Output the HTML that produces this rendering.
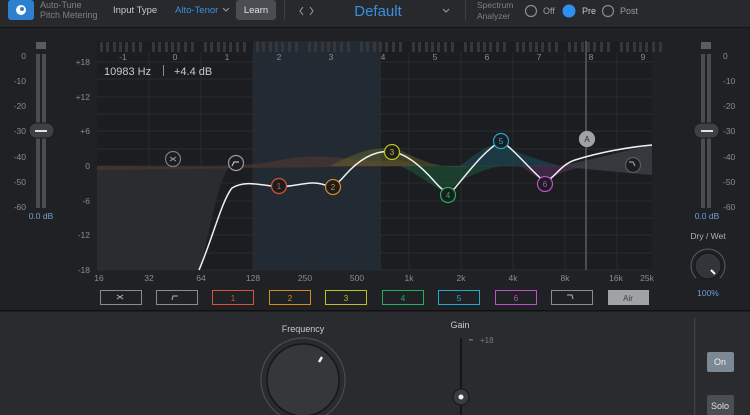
<!DOCTYPE html>
<html><head><meta charset="utf-8"><style>
*{margin:0;padding:0;box-sizing:border-box}
body{width:750px;height:415px;overflow:hidden;background:#202124;font-family:"Liberation Sans",sans-serif}
svg{display:block}
</style></head><body>
<svg width="750" height="415" viewBox="0 0 750 415" xmlns="http://www.w3.org/2000/svg" font-family="Liberation Sans, sans-serif">
<rect x="0" y="0" width="750" height="27" fill="#28292c"/>
<rect x="0" y="27" width="750" height="1" fill="#141517"/>
<rect x="8" y="0" width="26" height="20" rx="3" fill="#2d7fd0"/>
<circle cx="21" cy="10" r="5" fill="#fff"/><circle cx="22" cy="9" r="2" fill="#2d7fd0"/>
<text x="40" y="8" font-size="9" fill="#7d8085">Auto-Tune</text>
<text x="40" y="18" font-size="9" fill="#7d8085">Pitch Metering</text>
<text x="113" y="13" font-size="9.5" fill="#c8c9cc">Input Type</text>
<text x="175" y="13" font-size="9.5" fill="#3a8fe0">Alto-Tenor</text>
<path d="M223 8 l3 3 l3 -3" stroke="#9a9ca0" fill="none"/>
<rect x="236" y="0" width="40" height="20" rx="3" fill="#4a4d52"/>
<text x="256" y="13" font-size="9.5" fill="#e0e1e3" text-anchor="middle">Learn</text>
<rect x="284" y="0" width="1" height="20" fill="#3c3e42"/>
<path d="M303 7 l-3 4 l3 4 M310 7 l3 4 l-3 4" stroke="#9a9ca0" fill="none"/>
<text x="378" y="16" font-size="15" fill="#3a8fe0" text-anchor="middle">Default</text>
<path d="M443 9 l3 3 l3 -3" stroke="#9a9ca0" fill="none"/>
<rect x="465" y="0" width="1" height="20" fill="#3c3e42"/>
<text x="477" y="8" font-size="8.5" fill="#7d8085">Spectrum</text>
<text x="477" y="19" font-size="8.5" fill="#7d8085">Analyzer</text>
<circle cx="531" cy="11" r="5.5" fill="none" stroke="#8a8c90" stroke-width="1.2"/>
<text x="543" y="14" font-size="9" fill="#9a9ca0">Off</text>
<circle cx="569" cy="11" r="6.5" fill="#2e8ff0"/>
<text x="582" y="14" font-size="9" fill="#c8c9cc">Pre</text>
<circle cx="608" cy="11" r="5.5" fill="none" stroke="#8a8c90" stroke-width="1.2"/>
<text x="620" y="14" font-size="9" fill="#9a9ca0">Post</text>

<rect x="36" y="42" width="10" height="7" fill="#5a5c60"/>
<rect x="36" y="54" width="4" height="154" fill="#4a4c50"/>
<rect x="42" y="54" width="4" height="154" fill="#4a4c50"/>
<rect x="29" y="123" width="25" height="15" rx="7" fill="#3e4044" stroke="#1a1b1d"/>
<rect x="35" y="130" width="12" height="2" fill="#e0e0e0"/>
<g font-size="8.5" fill="#8a8c90" text-anchor="end">
<text x="26" y="59">0</text><text x="26" y="84">-10</text><text x="26" y="109">-20</text><text x="26" y="134">-30</text><text x="26" y="160">-40</text><text x="26" y="185">-50</text><text x="26" y="210">-60</text></g>
<text x="41" y="219" font-size="8.5" fill="#6f9fd0" text-anchor="middle">0.0 dB</text>
<rect x="701" y="42" width="10" height="7" fill="#5a5c60"/>
<rect x="701" y="54" width="4" height="154" fill="#4a4c50"/>
<rect x="707" y="54" width="4" height="154" fill="#4a4c50"/>
<rect x="694" y="123" width="25" height="15" rx="7" fill="#3e4044" stroke="#1a1b1d"/>
<rect x="701" y="130" width="12" height="2" fill="#e0e0e0"/>
<g font-size="8.5" fill="#8a8c90">
<text x="723" y="59">0</text><text x="723" y="84">-10</text><text x="723" y="109">-20</text><text x="723" y="134">-30</text><text x="723" y="160">-40</text><text x="723" y="185">-50</text><text x="723" y="210">-60</text></g>
<text x="707" y="219" font-size="8.5" fill="#6f9fd0" text-anchor="middle">0.0 dB</text>
<text x="708" y="239" font-size="8.5" fill="#b0b2b5" text-anchor="middle">Dry / Wet</text>
<path d="M696 278 A17 17 0 1 1 720 278" fill="none" stroke="#5a5c60"/>
<circle cx="708" cy="266" r="13" fill="#33353a" stroke="#141517"/>
<path d="M711 270 l4 4" stroke="#fff" stroke-width="2"/>
<text x="708" y="296" font-size="8.5" fill="#6f9fd0" text-anchor="middle">100%</text>

<rect x="97" y="41" width="555" height="229" fill="#1c1d20"/>
<rect x="253" y="41" width="128" height="229" fill="#222a34"/>
<g stroke="#2a2c30" stroke-width="1">
<path d="M97 62H652M97 79H652M97 97H652M97 114H652M97 131H652M97 149H652M97 166H652M97 183H652M97 201H652M97 218H652M97 235H652M97 253H652M97 270H652"/>
<path d="M149 52V270M201 52V270M253 52V270M305 52V270M357 52V270M409 52V270M461 52V270M513 52V270M565 52V270M617 52V270"/>
</g>
<g fill="#35373b">
<path d="M100 42h3v10h-3zM106 42h3v10h-3zM113 42h3v10h-3zM119 42h3v10h-3zM125 42h3v10h-3zM132 42h3v10h-3zM139 42h3v10h-3z" id="oct"/>
<use href="#oct" x="52"/><use href="#oct" x="104"/><use href="#oct" x="156"/><use href="#oct" x="208"/><use href="#oct" x="260"/><use href="#oct" x="312"/><use href="#oct" x="364"/><use href="#oct" x="416"/><use href="#oct" x="468"/><use href="#oct" x="520"/>
</g>
<g font-size="8.5" fill="#8a8c90" text-anchor="middle">
<text x="123" y="60">-1</text><text x="175" y="60">0</text><text x="227" y="60">1</text><text x="279" y="60">2</text><text x="331" y="60">3</text><text x="383" y="60">4</text><text x="435" y="60">5</text><text x="487" y="60">6</text><text x="539" y="60">7</text><text x="591" y="60">8</text><text x="643" y="60">9</text>
</g>
<g font-size="8.5" fill="#8a8c90" text-anchor="end">
<text x="90" y="65">+18</text><text x="90" y="100">+12</text><text x="90" y="134">+6</text><text x="90" y="169">0</text><text x="90" y="204">-6</text><text x="90" y="238">-12</text><text x="90" y="273">-18</text></g>
<g font-size="8.5" fill="#8a8c90" text-anchor="middle">
<text x="99" y="281">16</text><text x="149" y="281">32</text><text x="201" y="281">64</text><text x="253" y="281">128</text><text x="305" y="281">250</text><text x="357" y="281">500</text><text x="409" y="281">1k</text><text x="461" y="281">2k</text><text x="513" y="281">4k</text><text x="565" y="281">8k</text><text x="616" y="281">16k</text><text x="647" y="281">25k</text></g>
<text x="104" y="75" font-size="11" fill="#c8c9cc">10983 Hz</text>
<rect x="163" y="65" width="1" height="11" fill="#8a8c90"/>
<text x="174" y="75" font-size="11" fill="#c8c9cc">+4.4 dB</text>
<path d="M97 166H230C220 175 212 220 200 270H97Z" fill="#2b2c2f"/>
<path d="M97 166 C180 166 230 170 280 160 C330 150 360 165 400 160 L420 166 L97 170Z" fill="#5a3a30" opacity="0.5"/>
<path d="M330 166 C360 150 380 145 400 150 C420 160 440 170 470 166Z" fill="#6a6a2a" opacity="0.45"/>
<path d="M400 166 C430 180 440 195 450 190 C460 180 480 170 500 166Z" fill="#1d5a3a" opacity="0.55"/>
<path d="M460 166 C480 150 495 140 505 145 C520 155 540 160 560 166Z" fill="#1d5060" opacity="0.55"/>
<path d="M520 166 C535 175 540 182 548 180 C560 172 575 168 590 166Z" fill="#5a3060" opacity="0.55"/>
<path d="M560 166 C590 160 620 152 652 145 V175 C620 172 590 170 560 166Z" fill="#3a3c40" opacity="0.9"/>
<path d="M586 41V270" stroke="#6a6c70" stroke-width="1.2"/>
<path d="M199 270 C212 240 222 200 232 188 C245 180 260 185 279 187 C300 186 310 180 325 185 C335 190 340 180 350 170 C365 155 380 150 392 152 C405 153 420 165 435 182 C442 190 448 196 455 188 C470 170 485 150 501 141 C515 150 530 170 545 182 C555 178 560 165 575 160 C600 152 630 147 652 145" fill="none" stroke="#f0f0f0" stroke-width="1.5"/>
<g fill="#1c1d20" stroke-width="1.2" font-size="8" text-anchor="middle">
<circle cx="173" cy="159" r="7.5" stroke="#7a7c80"/><path d="M170 157l6 4M176 157l-6 4" stroke="#8a8c90"/>
<circle cx="236" cy="163" r="7.5" stroke="#9a9ca0"/><path d="M232 166l2-4h5" stroke="#c0c0c0" fill="none"/>
<circle cx="279" cy="186" r="7.5" stroke="#d8553a"/><text x="279" y="189" fill="#d8553a" stroke="none">1</text>
<circle cx="333" cy="187" r="7.5" stroke="#d88a20"/><text x="333" y="190" fill="#d88a20" stroke="none">2</text>
<circle cx="392" cy="152" r="7.5" stroke="#c0c020"/><text x="392" y="155" fill="#c0c020" stroke="none">3</text>
<circle cx="448" cy="195" r="7.5" stroke="#20b060"/><text x="448" y="198" fill="#20b060" stroke="none">4</text>
<circle cx="501" cy="141" r="7.5" stroke="#20a8d0"/><text x="501" y="144" fill="#20a8d0" stroke="none">5</text>
<circle cx="545" cy="184" r="7.5" stroke="#c050c8"/><text x="545" y="187" fill="#c050c8" stroke="none">6</text>
<circle cx="587" cy="139" r="7.5" fill="#a0a2a5" stroke="#a0a2a5"/><text x="587" y="142" fill="#2a2b2e" stroke="none">A</text>
<circle cx="633" cy="165" r="7.5" stroke="#5a5c60"/><path d="M629 162h4l2 4" stroke="#9a9ca0" fill="none"/>
</g>
<g fill="none" stroke-width="1" font-size="8" text-anchor="middle">
<rect x="100.5" y="290.5" width="41" height="14" stroke="#8a8c90"/><path d="M117 295l6 4M123 295l-6 4" stroke="#b0b2b5"/>
<rect x="156.5" y="290.5" width="41" height="14" stroke="#8a8c90"/><path d="M172 300l1-4h5" stroke="#b0b2b5"/>
<rect x="212.5" y="290.5" width="41" height="14" stroke="#d8553a"/><text x="233" y="301" fill="#d8553a">1</text>
<rect x="269.5" y="290.5" width="41" height="14" stroke="#d88a20"/><text x="290" y="301" fill="#d88a20">2</text>
<rect x="325.5" y="290.5" width="41" height="14" stroke="#c0c020"/><text x="346" y="301" fill="#c0c020">3</text>
<rect x="382.5" y="290.5" width="41" height="14" stroke="#20b060"/><text x="403" y="301" fill="#20b060">4</text>
<rect x="438.5" y="290.5" width="41" height="14" stroke="#20a8d0"/><text x="459" y="301" fill="#20a8d0">5</text>
<rect x="495.5" y="290.5" width="41" height="14" stroke="#c050c8"/><text x="516" y="301" fill="#c050c8">6</text>
<rect x="551.5" y="290.5" width="41" height="14" stroke="#8a8c90"/><path d="M567 295h5l1 4" stroke="#b0b2b5"/>
<rect x="608" y="290" width="41" height="15" fill="#a0a2a5"/><text x="628" y="301" fill="#3a3c40">Air</text>
</g>
<rect x="0" y="311" width="750" height="104" fill="#2a2b2e"/>
<rect x="0" y="310" width="750" height="1.5" fill="#111214"/>
<text x="303" y="332" font-size="9" fill="#c8c9cc" text-anchor="middle">Frequency</text>
<circle cx="303" cy="380" r="42" fill="none" stroke="#4a4c50" stroke-width="1.2"/>
<circle cx="303" cy="380" r="36" fill="#35373b" stroke="#151618" stroke-width="1.5"/>
<path d="M319 362 l3 -5" stroke="#f0f0f0" stroke-width="2.5"/>
<text x="460" y="328" font-size="9" fill="#c8c9cc" text-anchor="middle">Gain</text>
<rect x="460" y="338" width="2" height="80" fill="#151618"/>
<rect x="469" y="339" width="4" height="1.5" fill="#6a6c70"/>
<text x="480" y="343" font-size="8" fill="#7a7c80">+18</text>
<circle cx="461" cy="397" r="8" fill="#3a3c40" stroke="#151618"/>
<circle cx="461" cy="397" r="2.5" fill="#f0f0f0"/>
<rect x="694" y="318" width="1.5" height="97" fill="#3c3e42"/>
<rect x="707" y="352" width="27" height="20" rx="2" fill="#7d8895"/>
<text x="720" y="365" font-size="9" fill="#f0f0f0" text-anchor="middle">On</text>
<rect x="707" y="395" width="27" height="20" rx="2" fill="#4a4d52"/>
<text x="720" y="409" font-size="9" fill="#e0e1e3" text-anchor="middle">Solo</text>
</svg>
</body></html>
